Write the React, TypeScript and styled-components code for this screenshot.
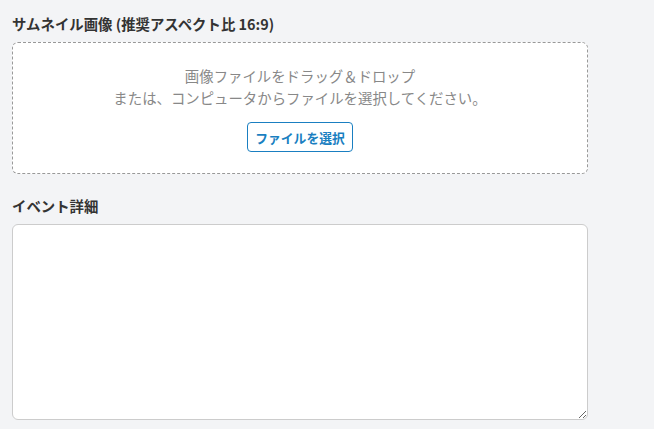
import React from "react";
import styled, { createGlobalStyle } from "styled-components";

const GlobalStyle = createGlobalStyle`
  html, body {
    margin: 0;
    padding: 0;
    background: #f3f4f6;
    font-family: "Noto Sans CJK JP", "Noto Sans", sans-serif;
  }
`;

const Page = styled.div`
  padding: 12px 12px 0 12px;
  width: 576px;
  display: flex;
  flex-direction: column;
`;

const Field = styled.div<{ $gap?: number }>`
  display: flex;
  flex-direction: column;
  margin-bottom: ${(p) => p.$gap ?? 0}px;
`;

const Label = styled.label`
  font-size: 14.4px;
  font-weight: 700;
  line-height: 24px;
  color: #333;
  margin-bottom: 6px;
`;

const DropZone = styled.div`
  box-sizing: border-box;
  height: 132px;
  border: 1px dashed #999;
  border-radius: 6px;
  background: #fff;
  display: flex;
  flex-direction: column;
  align-items: center;
  padding-top: 22px;
`;

const DropText = styled.p`
  margin: 0;
  font-size: 14.4px;
  line-height: 22px;
  color: #888;
  text-align: center;
`;

const SelectButton = styled.button`
  margin-top: 13px;
  box-sizing: border-box;
  height: 30px;
  padding: 0 7px;
  border: 1px solid #1a7fc1;
  border-radius: 4px;
  background: #fff;
  color: #1a7fc1;
  font-family: "Noto Sans CJK JP", "Noto Sans", sans-serif;
  font-size: 12.8px;
  font-weight: 700;
  cursor: pointer;
`;

const TextArea = styled.textarea`
  box-sizing: border-box;
  width: 576px;
  height: 196px;
  border: 1px solid #ccc;
  border-radius: 6px;
  background: #fff;
  resize: vertical;
  font-family: "Noto Sans CJK JP", "Noto Sans", sans-serif;
  font-size: 14px;
  padding: 8px;
  outline: none;
`;

export default function App() {
  return (
    <>
      <GlobalStyle />
      <Page>
        <Field $gap={20}>
          <Label>サムネイル画像 (推奨アスペクト比 16:9)</Label>
          <DropZone>
            <DropText>画像ファイルをドラッグ＆ドロップ</DropText>
            <DropText>または、コンピュータからファイルを選択してください。</DropText>
            <SelectButton type="button">ファイルを選択</SelectButton>
          </DropZone>
        </Field>
        <Field>
          <Label>イベント詳細</Label>
          <TextArea />
        </Field>
      </Page>
    </>
  );
}
